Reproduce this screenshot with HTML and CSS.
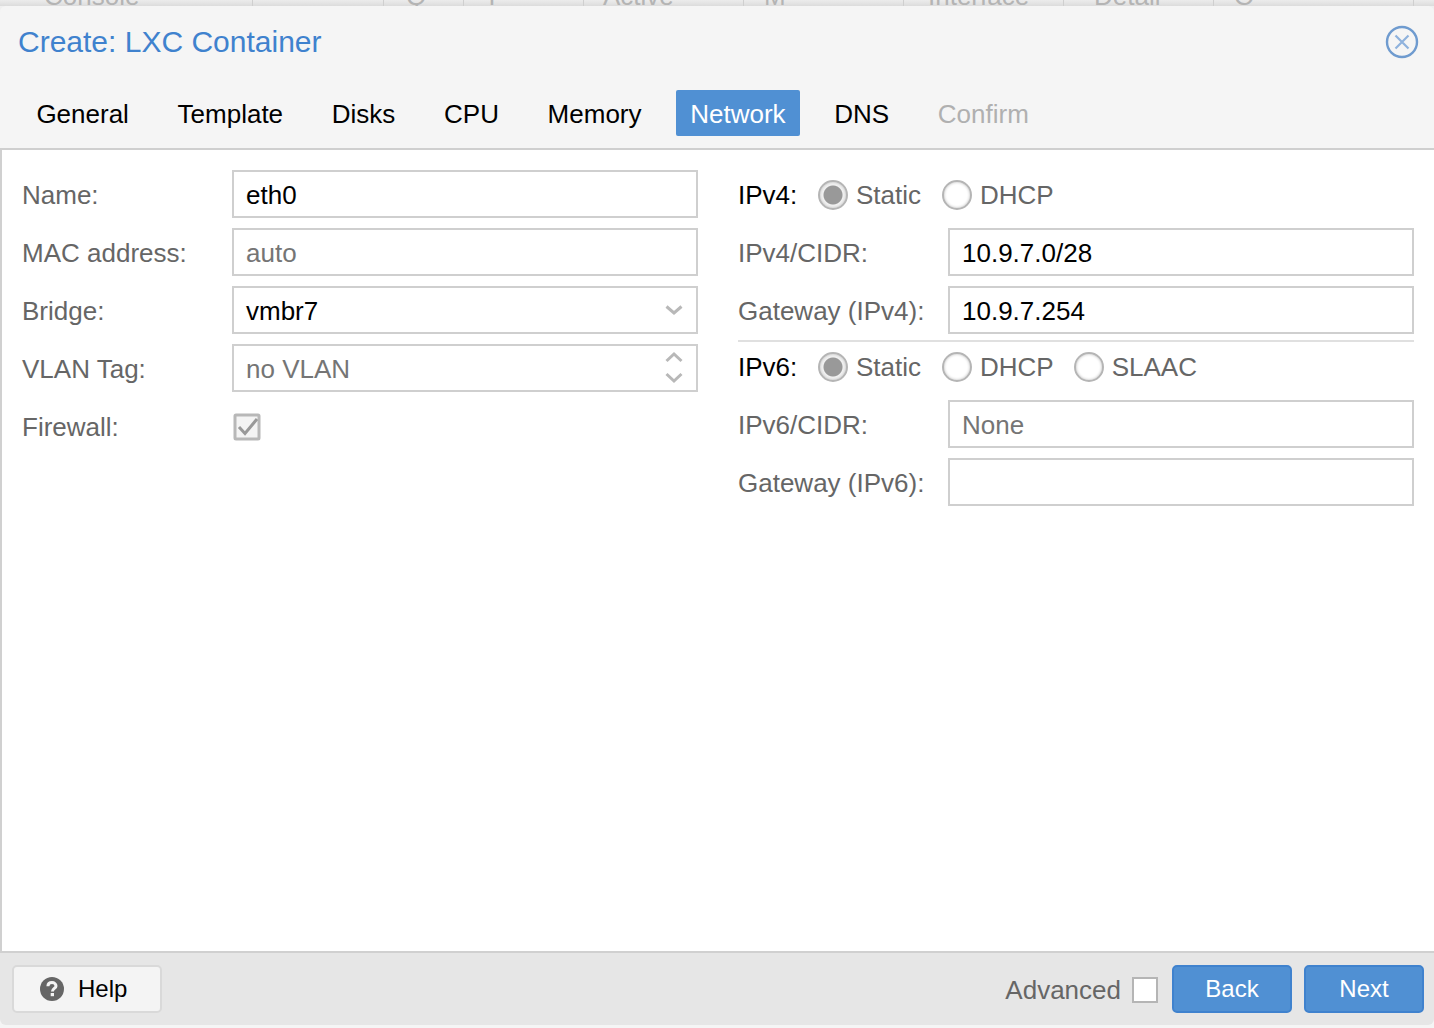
FILE: index.html
```html
<!DOCTYPE html>
<html lang="en">
<head>
    <meta charset="UTF-8">
    <title>Create: LXC Container</title>
    <link rel="stylesheet" href="styles.css">
</head>
<body>
    <div class="backdrop">
        <span class="ghost ghost-console">Console</span>
        <span class="ghost ghost-blank"></span>
        <span class="ghost ghost-a">Q</span>
        <span class="ghost ghost-b">T</span>
        <span class="ghost ghost-c">Active</span>
        <span class="ghost ghost-d">M</span>
        <span class="ghost ghost-e">Interface</span>
        <span class="ghost ghost-f">Detail</span>
        <span class="ghost ghost-g">O</span>
    </div>

    <div class="window">
        <header class="window-head">
            <h1>Create: LXC Container</h1>
            <svg class="close-icon" width="34" height="34" viewBox="0 0 34 34">
                <circle cx="17" cy="17" r="15" fill="none" stroke="#6f9bcf" stroke-width="2.4"/>
                <path d="M10.5 10.5 L23.5 23.5 M23.5 10.5 L10.5 23.5" stroke="#8fb2dd" stroke-width="2.2" fill="none"/>
            </svg>
        </header>

        <nav class="tabs">
            <a class="tab">General</a>
            <a class="tab">Template</a>
            <a class="tab">Disks</a>
            <a class="tab">CPU</a>
            <a class="tab">Memory</a>
            <a class="tab active">Network</a>
            <a class="tab">DNS</a>
            <a class="tab disabled">Confirm</a>
        </nav>

        <main class="panel">
            <section class="col">
                <div class="row">
                    <label class="lbl">Name:</label>
                    <div class="field">eth0</div>
                </div>
                <div class="row">
                    <label class="lbl">MAC address:</label>
                    <div class="field muted">auto</div>
                </div>
                <div class="row">
                    <label class="lbl">Bridge:</label>
                    <div class="field">
                        vmbr7
                        <svg class="trigger" width="20" height="14" viewBox="0 0 20 14">
                            <path d="M2.5 3.5 L10 10 L17.5 3.5" fill="none" stroke="#b8b8b8" stroke-width="3"/>
                        </svg>
                    </div>
                </div>
                <div class="row">
                    <label class="lbl">VLAN Tag:</label>
                    <div class="field muted">
                        no VLAN
                        <svg class="trigger" width="20" height="36" viewBox="0 0 20 36">
                            <path d="M2.5 11 L10 4 L17.5 11 M2.5 24 L10 31 L17.5 24" fill="none" stroke="#b8b8b8" stroke-width="3"/>
                        </svg>
                    </div>
                </div>
                <div class="row">
                    <label class="lbl">Firewall:</label>
                    <svg class="check" width="28" height="28" viewBox="0 0 28 28">
                        <rect x="2" y="2" width="24" height="24" fill="#f4f4f4" stroke="#b8b8b8" stroke-width="3" rx="1"/>
                        <path d="M6 14 L12 20.5 L24 6" fill="none" stroke="#999" stroke-width="3"/>
                    </svg>
                </div>
            </section>

            <section class="col">
                <div class="row">
                    <label class="lbl lbl-radio">IPv4:</label>
                    <span class="radio checked"></span><span class="radio-text">Static</span>
                    <span class="radio"></span><span class="radio-text">DHCP</span>
                </div>
                <div class="row">
                    <label class="lbl">IPv4/CIDR:</label>
                    <div class="field">10.9.7.0/28</div>
                </div>
                <div class="row">
                    <label class="lbl">Gateway (IPv4):</label>
                    <div class="field">10.9.7.254</div>
                </div>
                <div class="divider"></div>
                <div class="row">
                    <label class="lbl lbl-radio">IPv6:</label>
                    <span class="radio checked"></span><span class="radio-text">Static</span>
                    <span class="radio"></span><span class="radio-text">DHCP</span>
                    <span class="radio"></span><span class="radio-text">SLAAC</span>
                </div>
                <div class="row">
                    <label class="lbl">IPv6/CIDR:</label>
                    <div class="field muted">None</div>
                </div>
                <div class="row">
                    <label class="lbl">Gateway (IPv6):</label>
                    <div class="field"></div>
                </div>
            </section>
        </main>

        <footer class="window-foot">
            <button class="btn btn-help">
                <svg width="24" height="24" viewBox="0 0 24 24">
                    <circle cx="12" cy="12" r="12" fill="#666"/>
                    <path d="M7.9 9.2 C8 6.9 9.9 5.6 12 5.6 C14.3 5.6 16 7 16 8.9 C16 11.4 12.4 11.6 12.4 14.6" fill="none" stroke="#f4f4f4" stroke-width="3"/>
                    <rect x="10.7" y="16" width="3.3" height="3.2" fill="#f4f4f4"/>
                </svg>
                Help
            </button>
            <span class="advanced">Advanced</span>
            <span class="adv-box"></span>
            <button class="btn btn-primary">Back</button>
            <button class="btn btn-primary">Next</button>
        </footer>
    </div>
</body>
</html>
```

FILE: styles.css
```css
* {
    box-sizing: border-box;
}

body {
    margin: 0;
    height: 1028px;
    overflow: hidden;
    background: #f0f0f0;
    font-family: "Liberation Sans", Arial, sans-serif;
    font-size: 26px;
    color: #666;
    display: flex;
    flex-direction: column;
}

/* the page behind the dialog, only a sliver shows */
.backdrop {
    height: 6px;
    flex: none;
    overflow: hidden;
    display: flex;
    background: linear-gradient(#ececec, #dcdcdc);
    color: #b4b4b4;
    line-height: 20px;
}

.ghost {
    height: 20px;
    margin-top: -14px;
    padding-left: 20px;
    overflow: hidden;
    border-right: 1px solid #cfcfcf;
}

.ghost-console { width: 253px; padding-left: 44px; }
.ghost-blank { width: 131px; }
.ghost-a { width: 80px; padding-left: 22px; }
.ghost-b { width: 120px; }
.ghost-c { width: 160px; padding-left: 19px; }
.ghost-d { width: 160px; }
.ghost-e { width: 160px; padding-left: 24px; }
.ghost-f { width: 150px; padding-left: 30px; }
.ghost-g { width: 200px; }

.window {
    flex: 1;
    background: #f5f5f5;
    border-radius: 6px 6px 0 0;
    display: flex;
    flex-direction: column;
}

.window-head {
    height: 74px;
    flex: none;
    display: flex;
    justify-content: space-between;
    padding: 19px 15px 0 18px;
}

.window-head h1 {
    margin: 0;
    font-size: 30px;
    line-height: 34px;
    font-weight: normal;
    color: #3f82ce;
}

.close-icon {
    flex: none;
    filter: blur(0.5px);
}

.tabs {
    height: 70px;
    flex: none;
    display: flex;
    gap: 20.7px;
    padding: 10px 0 0 22.4px;
    border-bottom: 2px solid #cfcfcf;
}

.tab {
    height: 46px;
    line-height: 48px;
    padding: 0 14px;
    color: #000;
    border-radius: 2px;
    white-space: nowrap;
}

.tab.active {
    background: #5090d3;
    color: #fff;
}

.tab.disabled {
    color: #b0b0b0;
}

.panel {
    flex: none;
    height: 801px;
    background: #fff;
    border-left: 2px solid #d0d0d0;
    padding: 20px 20px 0 20px;
    display: flex;
    gap: 40px;
}

.col {
    flex: 1;
    min-width: 0;
    display: flex;
    flex-direction: column;
    gap: 10px;
}

.row {
    display: flex;
    align-items: center;
    height: 48px;
    flex: none;
}

.lbl {
    flex: none;
    width: 210px;
    padding-top: 2px;
}

.lbl-radio {
    width: 80px;
    color: #000;
}

.field {
    flex: 1;
    height: 48px;
    border: 2px solid #cfcfcf;
    background: #fff;
    color: #000;
    padding: 2px 0 0 12px;
    display: flex;
    align-items: center;
    justify-content: space-between;
}

.field.muted {
    color: #757575;
}

.trigger {
    flex: none;
    margin: -2px 12px 0 0;
    filter: blur(0.5px);
}

.check {
    flex: none;
    margin: 2px 0 0 1px;
    filter: blur(0.4px);
}

.radio {
    flex: none;
    width: 30px;
    height: 30px;
    margin-top: 2px;
    border-radius: 50%;
    border: 2px solid #b5b5b5;
    background: #fff;
    box-shadow: inset 0 0 3px #bbb;
}

.radio.checked {
    background: radial-gradient(circle, #999 0, #999 9px, #f2f2f2 10px);
}

.radio-text {
    margin: 2px 21px 0 8px;
}

.radio-text + .radio + .radio-text + .radio {
    margin-left: -1px;
}

.divider {
    height: 2px;
    background: #e0e0e0;
    margin: -4px 0 -10px;
    flex: none;
}

.window-foot {
    flex: 1;
    background: #e6e6e6;
    border-top: 2px solid #d0d0d0;
    display: flex;
    align-items: center;
    padding: 0 10px 0 12px;
    margin-bottom: 3px;
    border-radius: 0 0 6px 6px;
}

.btn {
    font-family: inherit;
    font-size: 24px;
    height: 48px;
    border-radius: 5px;
    cursor: pointer;
}

.btn-help {
    width: 150px;
    margin-right: auto;
    background: #f4f4f4;
    border: 2px solid #d9d9d9;
    color: #000;
    display: flex;
    align-items: center;
    gap: 14px;
    padding: 0 0 0 26px;
}

.btn-primary {
    width: 120px;
    background: #5090d3;
    border: 2px solid #3f82ce;
    color: #fff;
    margin-left: 12px;
}

.advanced {
    margin: 2px 11px 0 0;
}

.adv-box {
    width: 26px;
    height: 26px;
    margin: 2px 2px 0 0;
    background: #fff;
    border: 2px solid #b5b5b5;
}
```
